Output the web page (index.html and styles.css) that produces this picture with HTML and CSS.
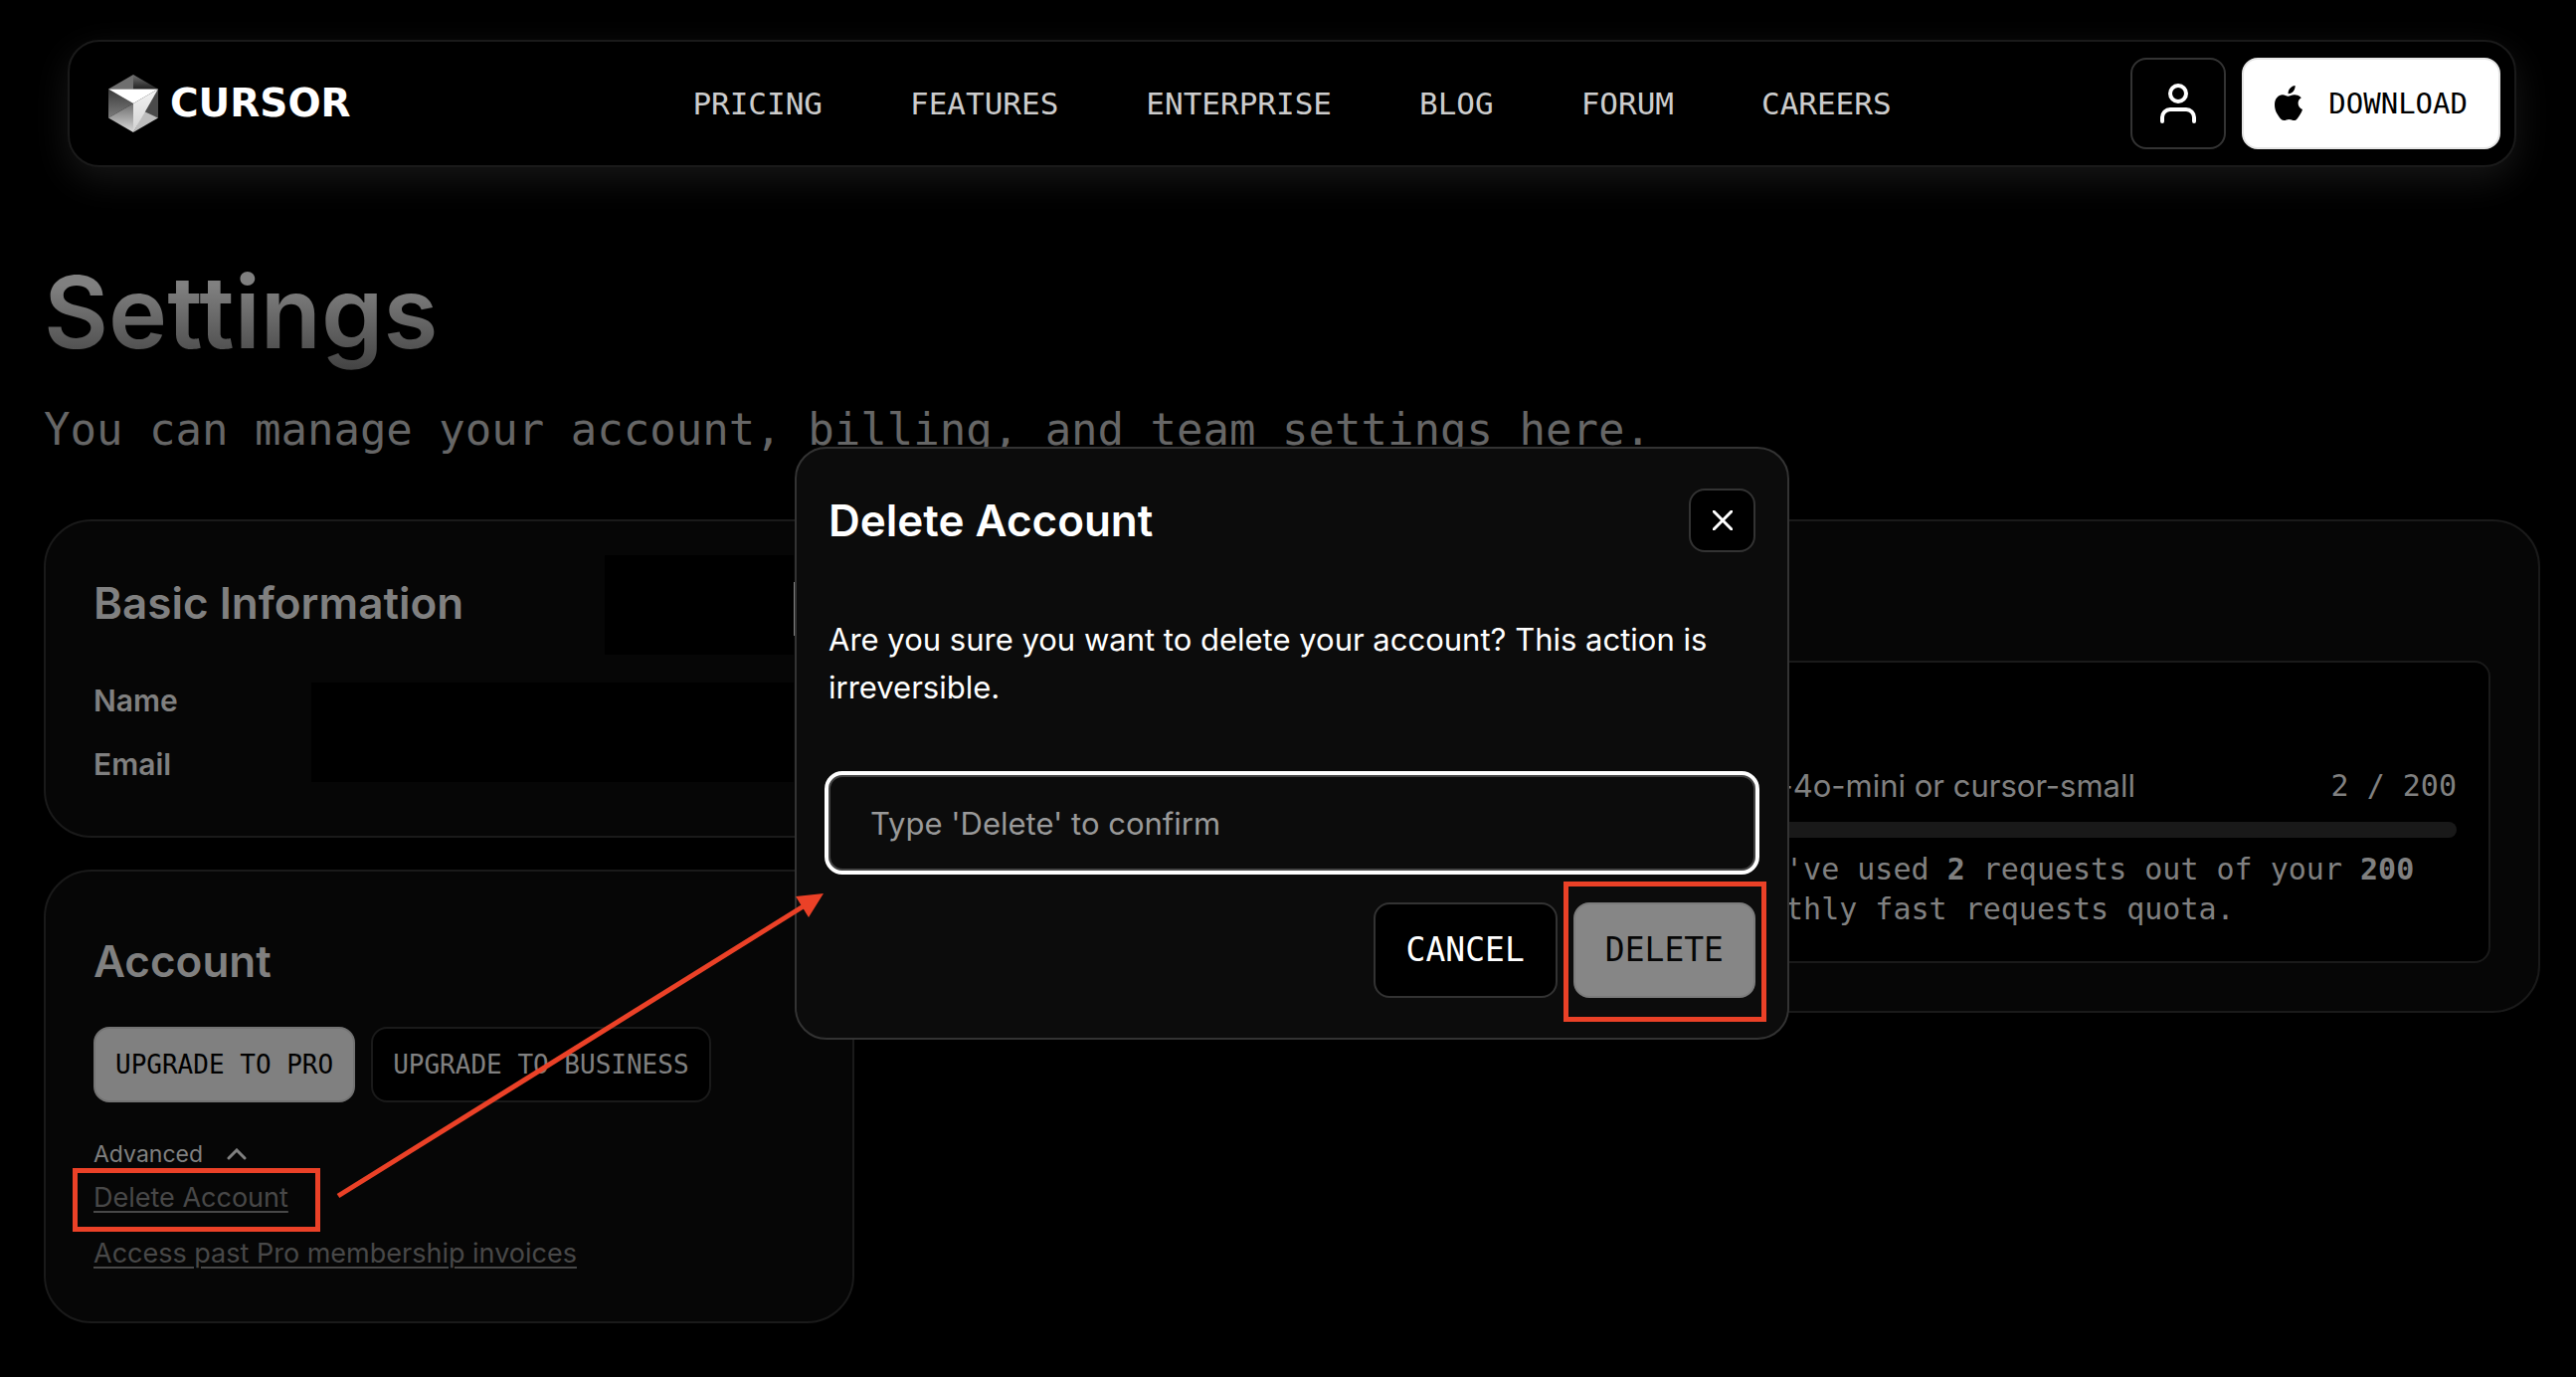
FILE: index.html
```html
<!DOCTYPE html>
<html lang="en">
<head>
<meta charset="utf-8">
<meta name="viewport" content="width=device-width, initial-scale=1">
<title>Settings</title>
<link rel="stylesheet" href="styles.css">
</head>
<body>
<div class="page">
  <header class="navbar">
    <a class="logo" href="#">
      <svg class="logo-cube" viewBox="0 0 50 58" aria-hidden="true">
        <defs>
          <linearGradient id="left" x1="0" y1="0" x2="0" y2="1"><stop offset="0" stop-color="#3a3a3a"/><stop offset="1" stop-color="#7c7c7c"/></linearGradient>
          <linearGradient id="base" x1="0" y1="0" x2="0" y2="1"><stop offset="0" stop-color="#6c6c6c"/><stop offset="1" stop-color="#dadada"/></linearGradient>
          <linearGradient id="beam" x1="0" y1="0" x2="0" y2="1"><stop offset="0" stop-color="#f4f4f4"/><stop offset="1" stop-color="#d2d2d2"/></linearGradient>
          <linearGradient id="lid" x1="0" y1="0" x2="0" y2="1"><stop offset="0" stop-color="#707070"/><stop offset="1" stop-color="#222"/></linearGradient>
        </defs>
        <path fill="#6f6f6f" d="M25 0 0 14.500h25z"/>
        <path fill="url(#lid)" d="M25 0v14.500h25z"/>
        <path fill="url(#left)" d="M0 14.500 25 29 0 43.500z"/>
        <path fill="#4a4a4a" d="M50 14.500v29L35 38z"/>
        <path fill="url(#base)" d="M0 43.500 25 29v29z"/>
        <path fill="#bdbdbd" d="M50 43.500 25 58 36 37z"/>
        <path fill="url(#beam)" d="M50 14.500 25 29v29z"/>
        <path fill="#fff" d="M0 14.500h50L25 29z"/>
      </svg>
      <span>CURSOR</span>
    </a>
    <nav class="links">
      <a href="#">PRICING</a>
      <a href="#">FEATURES</a>
      <a href="#">ENTERPRISE</a>
      <a href="#">BLOG</a>
      <a href="#">FORUM</a>
      <a href="#">CAREERS</a>
    </nav>
    <div class="nav-actions">
      <button class="btn user" type="button" aria-label="Account">
        <svg viewBox="0 0 40 44" aria-hidden="true"><circle cx="20" cy="12" r="8"/><path d="M4 40v-4a8 8 0 0 1 8-8h16a8 8 0 0 1 8 8v4"/></svg>
      </button>
      <button class="btn light download" type="button">
        <svg viewBox="0 0 28 36" aria-hidden="true"><path d="M20.600 0c.3 2.200-.6 4.200-1.800 5.700-1.300 1.500-3.200 2.600-5.200 2.500-.2-2.100.7-4.200 1.900-5.500C16.800 1.200 18.900.2 20.600 0zM26.800 12.200c-2 1.300-3.200 3-3.200 5.500 0 3 1.700 5.200 4.400 6.300-.5 1.600-1.200 3.200-2.200 4.800-1.600 2.500-3.400 6.300-6.100 6.300-2.100 0-3-1.200-5.200-1.200s-3.200 1.200-5.200 1.200c-2.700.1-4.800-3.500-6.400-6C.8 26 0 22.600 0 19.200 0 13 3.900 9.400 7.900 9.300c2.200 0 4.200 1.400 5.700 1.400 1.400 0 3.900-1.700 6.700-1.500 1.200.1 4.500.5 6.500 3z"/></svg>
        DOWNLOAD
      </button>
    </div>
  </header>

  <main>
    <h1>Settings</h1>
    <p class="lead">You can manage your account, billing, and team settings here.</p>
    <div class="columns">
      <div class="stack">
        <section class="card">
          <div class="card-head">
            <h2>Basic Information</h2>
            <div class="redacted edge"></div>
          </div>
          <div class="fields">
            <div class="field-names"><span>Name</span><span>Email</span></div>
            <div class="redacted wide"></div>
          </div>
        </section>
        <section class="card account">
          <h2>Account</h2>
          <div class="plans">
            <button class="btn dim" type="button">UPGRADE TO PRO</button>
            <button class="btn dark" type="button">UPGRADE TO BUSINESS</button>
          </div>
          <button class="advanced" type="button">Advanced
            <svg viewBox="0 0 20 12" aria-hidden="true"><path d="M2 10l8-8 8 8"/></svg>
          </button>
          <a class="muted-link marked" href="#">Delete Account</a>
          <a class="muted-link" href="#">Access past Pro membership invoices</a>
        </section>
      </div>
      <section class="card usage">
        <div class="quota">
          <div class="quota-row"><span>gpt-4o-mini or cursor-small</span><span class="count">2 / 200</span></div>
          <div class="bar"></div>
          <p>You've used <b>2</b> requests out of your <b>200</b> monthly fast requests quota.</p>
        </div>
      </section>
    </div>
  </main>
</div>

<div class="overlay">
  <form class="modal" role="dialog" aria-labelledby="modal-title">
    <div class="modal-head">
      <h2 id="modal-title">Delete Account</h2>
      <button class="btn close" type="button" aria-label="Close">
        <svg viewBox="0 0 20 20" aria-hidden="true"><path d="M1 1l18 18M19 1L1 19"/></svg>
      </button>
    </div>
    <p>Are you sure you want to delete your account? This action is irreversible.</p>
    <input type="text" placeholder="Type 'Delete' to confirm" aria-label="Type 'Delete' to confirm">
    <div class="modal-actions">
      <button class="btn" type="button">CANCEL</button>
      <div class="marked-box"><button class="btn disabled" type="button">DELETE</button></div>
    </div>
  </form>
</div>
<svg class="arrow" viewBox="0 0 492 310" aria-hidden="true"><path class="shaft" d="M2 306 476 11"/><path class="head" d="M490 2 462 5l13 21z"/></svg>
</body>
</html>
```
FILE: styles.css
```css
:root {
  --sans: Inter, "Liberation Sans", sans-serif;
  --mono: "DejaVu Sans Mono", "Liberation Mono", monospace;
  --dim: #808080;
  --line: #1a1a1a;
  --mark: #eb4127;
}

* { box-sizing: border-box; }

body {
  margin: 0;
  position: relative;
  background: #000;
  color: var(--dim);
  font-family: var(--sans);
}

h1, h2, p { margin: 0; }

a { color: inherit; text-decoration: none; }

.page { padding: 40px 36px 52px 44px; }

/* Navigation */
.navbar {
  display: grid;
  grid-template-columns: 1fr auto 1fr;
  align-items: center;
  margin: 0 24px;
  padding: 16px 14px;
  border: 2px solid var(--line);
  border-radius: 32px;
  background: #000;
  box-shadow: 0 12px 36px rgba(255, 255, 255, 0.09);
}

.logo {
  display: flex;
  align-items: center;
  gap: 12px;
  margin-left: 25px;
  color: #fff;
  font: 700 39px/48px "DejaVu Sans", sans-serif;
}

.logo-cube { width: 50px; height: 58px; }

.links {
  display: flex;
  gap: 88px;
  color: #ccc;
  font: 31px/40px var(--mono);
}

.nav-actions {
  display: flex;
  justify-content: flex-end;
  gap: 16px;
}

/* Buttons */
.btn {
  display: flex;
  align-items: center;
  justify-content: center;
  height: 96px;
  padding: 0 31px;
  border: 2px solid #333;
  border-radius: 16px;
  background: #000;
  color: #fff;
  font: 33px/40px var(--mono);
}

.nav-actions .btn { height: 92px; }

.nav-actions .user { width: 96px; padding: 0; }

.user svg { width: 40px; height: 44px; }

.btn svg,
.advanced svg {
  fill: none;
  stroke: currentColor;
  stroke-width: 4;
  stroke-linecap: round;
}

.btn.light {
  gap: 26px;
  padding: 0 31px;
  border-color: #e6e6e6;
  background: #fff;
  color: #000;
  font-size: 29px;
}

.btn.download svg {
  width: 28px;
  height: 36px;
  fill: currentColor;
  stroke: none;
}

.btn.disabled {
  padding: 0 30px;
  border-color: #7b7b7b;
  background: #868686;
  color: #060606;
}

/* Page heading */
h1 {
  width: fit-content;
  margin-top: 96px;
  padding-bottom: 12px;
  background: linear-gradient(#808080 20%, #404040);
  background-clip: text;
  color: transparent;
  font-size: 100px;
  font-weight: 600;
  line-height: 100px;
}

.lead {
  margin-top: 26px;
  color: #666;
  font: 44px/60px var(--mono);
}

/* Cards */
.columns {
  display: grid;
  grid-template-columns: 815fr 1663fr;
  align-items: start;
  gap: 32px;
  margin-top: 60px;
}

.stack { display: grid; gap: 32px; }

.card {
  padding: 48px;
  border: 2px solid var(--line);
  border-radius: 48px;
  background: #060606;
}

h2 {
  font-size: 44px;
  font-weight: 600;
  line-height: 68px;
}

.card-head { display: flex; height: 68px; }

.redacted {
  position: relative;
  flex: none;
  width: 190px;
  height: 100px;
  background: #000;
}

.card-head .redacted { margin: -14px 11px 0 auto; }

.edge::after {
  content: "";
  position: absolute;
  top: 27px;
  left: 100%;
  width: 1px;
  height: 54px;
  background: var(--dim);
}

.fields {
  display: flex;
  justify-content: space-between;
  height: 112px;
  margin-top: 40px;
}

.field-names {
  display: grid;
  gap: 16px;
  font-size: 30px;
  font-weight: 600;
  line-height: 48px;
}

.redacted.wide { width: 485px; margin: 6px 11px 0 0; }

.account { padding-top: 56px; }

.plans {
  display: flex;
  gap: 16px;
  margin-top: 32px;
}

.plans .btn {
  height: 76px;
  padding: 0 20px;
  font-size: 26px;
}

.btn.dim {
  border-color: #737373;
  background: var(--dim);
  color: #000;
}

.btn.dark { border-color: var(--line); color: var(--dim); }

.advanced {
  display: flex;
  align-items: center;
  gap: 24px;
  margin: 36px 0 8px;
  padding: 0;
  border: 0;
  background: none;
  color: var(--dim);
  font: 23px/32px var(--sans);
}

.advanced svg { width: 20px; height: 12px; stroke-width: 3; }

.muted-link {
  display: block;
  position: relative;
  width: fit-content;
  color: #484848;
  font-size: 27px;
  line-height: 40px;
  text-decoration: underline;
  text-decoration-thickness: 2px;
  text-underline-offset: 4px;
}

.muted-link + .muted-link { margin-top: 16px; }

/* Usage */
.card.usage { padding-top: 140px; }

.quota {
  width: 51%;
  margin-left: auto;
  padding: 104px 32px 32px;
  border: 2px solid var(--line);
  border-radius: 16px;
  background: #000;
}

.quota-row {
  display: flex;
  justify-content: space-between;
  font-size: 31px;
  line-height: 40px;
}

.count { font: 30px/40px var(--mono); }

.bar {
  height: 16px;
  margin: 16px 0 12px;
  border-radius: 8px;
  background: #191919;
}

.quota p { font: 30px/40px var(--mono); }

/* Dialog */
.overlay {
  position: absolute;
  inset: 0;
  display: flex;
  align-items: flex-start;
  justify-content: center;
  padding: 449px 0 0 8px;
}

.modal {
  width: 1000px;
  padding: 40px 32px;
  border: 2px solid #333;
  border-radius: 32px;
  background: #0c0c0c;
  color: #fff;
}

.modal-head {
  display: flex;
  align-items: center;
  justify-content: space-between;
  height: 64px;
}

.btn.close { width: 67px; height: 64px; padding: 0; }

.btn.close svg { width: 20px; height: 20px; stroke-width: 3; }

.modal p {
  margin: 64px 0;
  font-size: 31px;
  line-height: 48px;
}

.modal input {
  display: block;
  width: 100%;
  height: 96px;
  padding: 0 40px;
  border: 2px solid #444;
  border-radius: 14px;
  outline: 4px solid #fff;
  background: transparent;
  color: #fff;
  font: 31px/40px var(--sans);
}

.modal input::placeholder { color: #999; }

.modal-actions {
  display: flex;
  justify-content: flex-end;
  gap: 16px;
  margin-top: 32px;
}

/* Red callouts */
.marked-box { position: relative; }

.marked::after,
.marked-box::after {
  content: "";
  position: absolute;
  inset: -10px -32px -14px -21px;
  border: 5px solid var(--mark);
}

.marked-box::after { inset: -21px -11px -24px -10px; }

.arrow {
  position: absolute;
  top: 896px;
  left: 338px;
  width: 492px;
  height: 310px;
  pointer-events: none;
}

.shaft { stroke: var(--mark); stroke-width: 5; }

.head { fill: var(--mark); }
```
